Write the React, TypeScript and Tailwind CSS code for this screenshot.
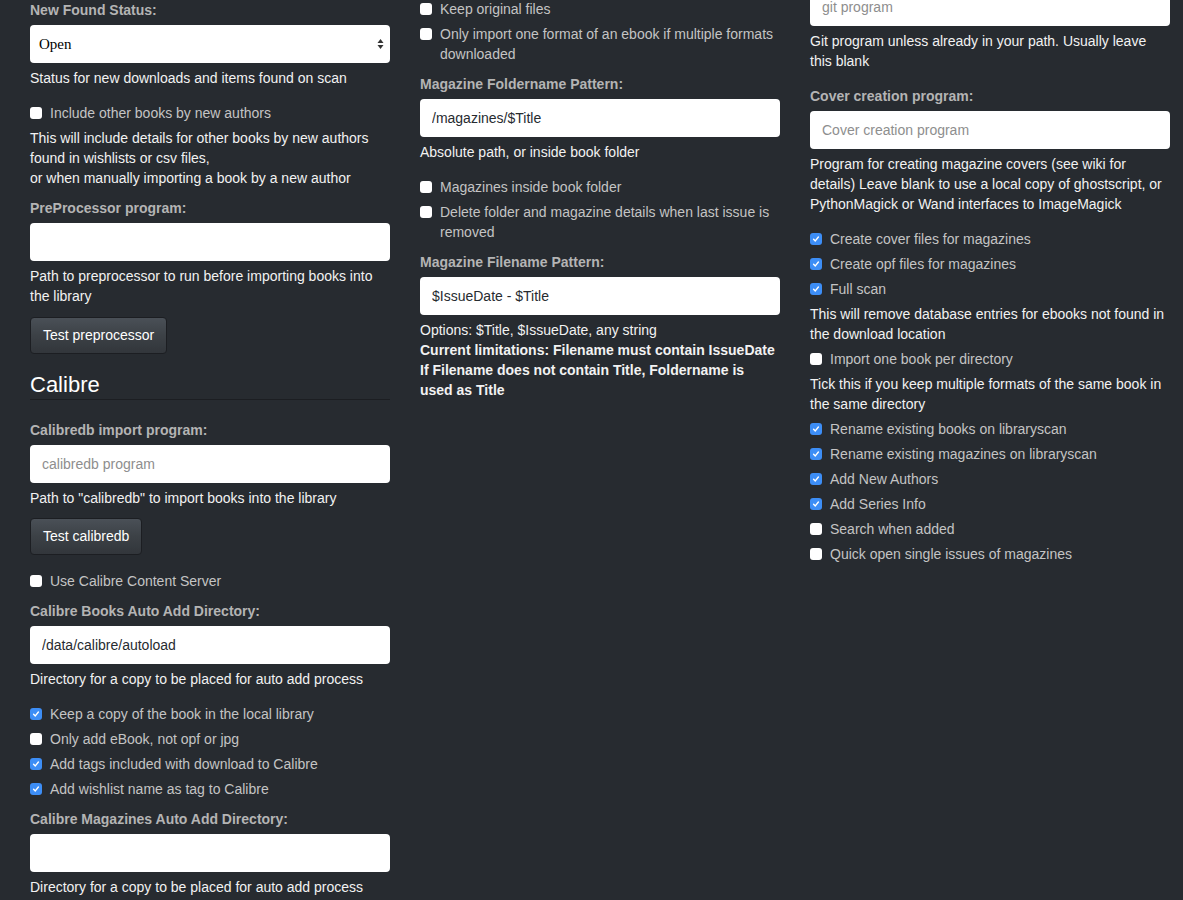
import React from 'react';

const font = { fontFamily: '"Liberation Sans", Arial, sans-serif' };

function Label({ text, className = '' }: { text: string; className?: string }) {
    return <div className={`h-5 leading-5 font-bold text-[#b4b4b4] ${className}`}>{text}</div>;
}

function Help({ children, className = '' }: { children: React.ReactNode; className?: string }) {
    return <div className={`leading-5 text-[#f2f2f2] ${className}`}>{children}</div>;
}

function TextInput({ value, placeholder, className = '' }: { value?: string; placeholder?: string; className?: string }) {
    return (
        <input
            readOnly
            defaultValue={value}
            placeholder={placeholder}
            className={`block h-[38px] w-full rounded-[4px] bg-white px-3 text-[14px] text-[#272b30] placeholder:text-[#8e8e8e] outline-none ${className}`}
            style={font}
        />
    );
}

function Check({ label, checked = false, className = '' }: { label: string; checked?: boolean; className?: string }) {
    return (
        <label className={`flex items-start leading-5 ${className}`}>
            <span
                className={`mt-[4px] flex h-3 w-3 shrink-0 items-center justify-center rounded-[3px] ${checked ? 'bg-[#3d8ef6]' : 'bg-white'}`}
            >
                {checked && (
                    <svg width="8" height="8" viewBox="0 0 8 8">
                        <path d="M1.6 4.2 L3.3 5.9 L6.4 2" fill="none" stroke="white" strokeWidth="1.4" strokeLinecap="round" strokeLinejoin="round" />
                    </svg>
                )}
            </span>
            <span className="ml-2 text-[#c4c4c4]">{label}</span>
        </label>
    );
}

function Button({ text, className = '' }: { text: string; className?: string }) {
    return (
        <div className={className}>
            <button className="h-[37px] rounded-[4px] border border-[#1c1e22] bg-gradient-to-b from-[#4a5057] via-[#3c4146] to-[#32363b] px-3 text-white">
                {text}
            </button>
        </div>
    );
}

export default function App() {
    return (
        <div className="min-h-[900px] overflow-hidden bg-[#272b30] text-[14px]" style={font}>
            <div className="grid grid-cols-[360px_360px_360px] gap-x-[30px] pl-[30px]">
                {/* Left column */}
                <div>
                    <Label text="New Found Status:" />
                    <div className="relative mt-[5px] h-[38px] rounded-[4px] bg-white">
                        <div className="flex h-full items-center pl-[9px] text-[15px] text-black" style={{ fontFamily: '"Liberation Serif", serif' }}>
                            Open
                        </div>
                        <svg className="absolute right-[6px] top-[13px]" width="7" height="12" viewBox="0 0 7 12">
                            <path d="M3.5 1 L6.5 5 L0.5 5 Z" fill="#333" />
                            <path d="M3.5 11 L6.5 7 L0.5 7 Z" fill="#333" />
                        </svg>
                    </div>
                    <Help className="mt-[5px]">Status for new downloads and items found on scan</Help>
                    <Check className="mt-[15px]" label="Include other books by new authors" />
                    <Help className="mt-[5px]">
                        This will include details for other books by new authors
                        <br />
                        found in wishlists or csv files,
                        <br />
                        or when manually importing a book by a new author
                    </Help>
                    <Label className="mt-[10px]" text="PreProcessor program:" />
                    <TextInput className="mt-[5px]" />
                    <Help className="mt-[5px]">Path to preprocessor to run before importing books into the library</Help>
                    <Button className="mt-[11px]" text="Test preprocessor" />

                    <div className="mt-[16px] h-[30px] border-b border-[#1c1e22] text-[22px] leading-[30px] text-white">Calibre</div>

                    <Label className="mt-[20px]" text="Calibredb import program:" />
                    <TextInput className="mt-[5px]" placeholder="calibredb program" />
                    <Help className="mt-[5px]">Path to "calibredb" to import books into the library</Help>
                    <Button className="mt-[10px]" text="Test calibredb" />
                    <Check className="mt-[16px]" label="Use Calibre Content Server" />
                    <Label className="mt-[10px]" text="Calibre Books Auto Add Directory:" />
                    <TextInput className="mt-[5px]" value="/data/calibre/autoload" />
                    <Help className="mt-[5px]">Directory for a copy to be placed for auto add process</Help>
                    <Check className="mt-[15px]" checked label="Keep a copy of the book in the local library" />
                    <Check className="mt-[5px]" label="Only add eBook, not opf or jpg" />
                    <Check className="mt-[5px]" checked label="Add tags included with download to Calibre" />
                    <Check className="mt-[5px]" checked label="Add wishlist name as tag to Calibre" />
                    <Label className="mt-[10px]" text="Calibre Magazines Auto Add Directory:" />
                    <TextInput className="mt-[5px]" />
                    <Help className="mt-[5px]">Directory for a copy to be placed for auto add process</Help>
                </div>

                {/* Middle column */}
                <div className="-mt-px">
                    <Check label="Keep original files" />
                    <Check className="mt-[5px]" label="Only import one format of an ebook if multiple formats downloaded" />
                    <Label className="mt-[10px]" text="Magazine Foldername Pattern:" />
                    <TextInput className="mt-[5px]" value="/magazines/$Title" />
                    <Help className="mt-[5px]">Absolute path, or inside book folder</Help>
                    <Check className="mt-[15px]" label="Magazines inside book folder" />
                    <Check className="mt-[5px]" label="Delete folder and magazine details when last issue is removed" />
                    <Label className="mt-[10px]" text="Magazine Filename Pattern:" />
                    <TextInput className="mt-[5px]" value="$IssueDate - $Title" />
                    <Help className="mt-[5px]">
                        Options: $Title, $IssueDate, any string
                        <br />
                        <b>Current limitations: Filename must contain IssueDate</b>
                        <br />
                        <b>If Filename does not contain Title, Foldername is used as Title</b>
                    </Help>
                </div>

                {/* Right column */}
                <div className="-mt-[12px]">
                    <TextInput placeholder="git program" />
                    <Help className="mt-[5px]">Git program unless already in your path. Usually leave this blank</Help>
                    <Label className="mt-[15px]" text="Cover creation program:" />
                    <TextInput className="mt-[5px]" placeholder="Cover creation program" />
                    <Help className="mt-[5px]">
                        Program for creating magazine covers (see wiki for details) Leave blank to use a local copy of ghostscript, or PythonMagick or Wand interfaces to ImageMagick
                    </Help>
                    <Check className="mt-[15px]" checked label="Create cover files for magazines" />
                    <Check className="mt-[5px]" checked label="Create opf files for magazines" />
                    <Check className="mt-[5px]" checked label="Full scan" />
                    <Help className="mt-[5px]">This will remove database entries for ebooks not found in the download location</Help>
                    <Check className="mt-[5px]" label="Import one book per directory" />
                    <Help className="mt-[5px]">Tick this if you keep multiple formats of the same book in the same directory</Help>
                    <Check className="mt-[5px]" checked label="Rename existing books on libraryscan" />
                    <Check className="mt-[5px]" checked label="Rename existing magazines on libraryscan" />
                    <Check className="mt-[5px]" checked label="Add New Authors" />
                    <Check className="mt-[5px]" checked label="Add Series Info" />
                    <Check className="mt-[5px]" label="Search when added" />
                    <Check className="mt-[5px]" label="Quick open single issues of magazines" />
                </div>
            </div>
        </div>
    );
}
